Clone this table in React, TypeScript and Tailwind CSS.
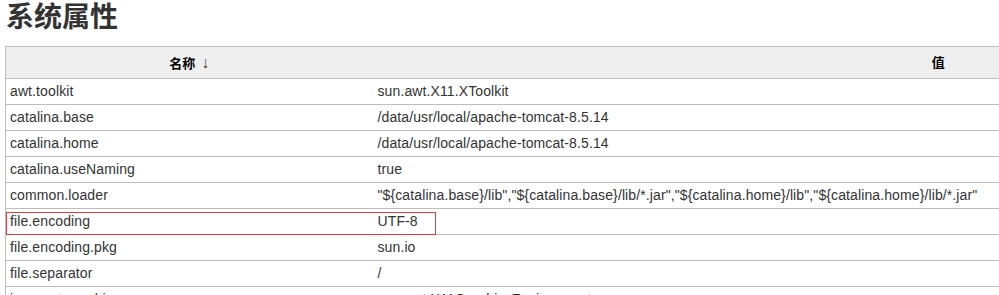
import React from "react"

const rows: [string, string][] = [
  ["awt.toolkit", "sun.awt.X11.XToolkit"],
  ["catalina.base", "/data/usr/local/apache-tomcat-8.5.14"],
  ["catalina.home", "/data/usr/local/apache-tomcat-8.5.14"],
  ["catalina.useNaming", "true"],
  [
    "common.loader",
    '"${catalina.base}/lib","${catalina.base}/lib/*.jar","${catalina.home}/lib","${catalina.home}/lib/*.jar"',
  ],
  ["file.encoding", "UTF-8"],
  ["file.encoding.pkg", "sun.io"],
  ["file.separator", "/"],
  ["java.awt.graphicsenv", "sun.awt.X11GraphicsEnvironment"],
]

export default function App() {
  return (
    <div
      className="w-[999px] h-[295px] overflow-hidden bg-white text-[#333]"
      style={{ fontFamily: '"Liberation Sans", Arial, "Noto Sans CJK SC", sans-serif' }}
    >
      <h1 className="pl-[6px] text-[28px] font-bold leading-[36px] h-[46px] pt-0">系统属性</h1>

      <div className="relative ml-[5px] w-[1499px]">
        <table className="w-full border-collapse border-l border-t border-[#bdbdbd] text-[14px] tracking-[0.11px]">
          <thead>
            <tr className="bg-[#efefef] h-[32px]">
              <th className="w-[367px] text-center text-[13px] font-bold text-black p-0 border-b border-[#bdbdbd]">
                名称 <span className="ml-[2px] text-[16px] font-normal text-[#444]">↓</span>
              </th>
              <th className="text-center text-[13px] font-bold text-black p-0 border-b border-[#bdbdbd]">值</th>
            </tr>
          </thead>
          <tbody>
            {rows.map(([name, value]) => (
              <tr key={name} className="h-[26px]">
                <td className="px-[4px] py-0 border-b border-[#bdbdbd] whitespace-nowrap">{name}</td>
                <td className="px-[5px] py-0 border-b border-[#bdbdbd] whitespace-nowrap">{value}</td>
              </tr>
            ))}
          </tbody>
        </table>

        {/* highlight around the file.encoding row */}
        <div className="absolute left-[1px] top-[166px] w-[430px] h-[23px] border border-[#e8393b] pointer-events-none" />
      </div>
    </div>
  )
}
